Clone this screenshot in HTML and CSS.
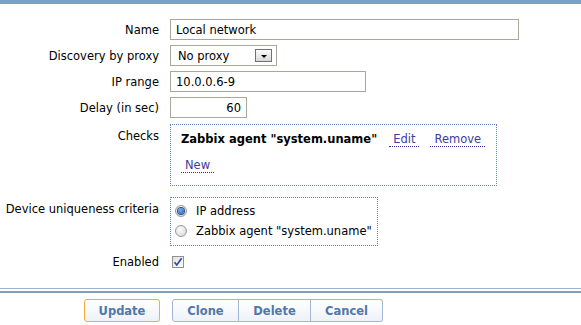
FILE: index.html
```html
<!DOCTYPE html>
<html lang="en">
<head>
  <meta charset="UTF-8">
  <title>Discovery rule</title>
  <link rel="stylesheet" href="styles.css">
</head>
<body>
<div class="topbar"></div>
<form class="form">
  <div class="row">
    <label class="lbl">Name</label>
    <div class="field"><input class="text name-input" type="text" value="Local network"></div>
  </div>
  <div class="row">
    <label class="lbl">Discovery by proxy</label>
    <div class="field">
      <div class="select"><span class="select-value">No proxy</span><span class="select-btn"><span class="select-arrow"></span></span></div>
    </div>
  </div>
  <div class="row">
    <label class="lbl">IP range</label>
    <div class="field"><input class="text ip-input" type="text" value="10.0.0.6-9"></div>
  </div>
  <div class="row delay-row">
    <label class="lbl">Delay (in sec)</label>
    <div class="field"><input class="text delay-input" type="text" value="60"></div>
  </div>
  <div class="row checks-row">
    <label class="lbl lbl-top">Checks</label>
    <div class="field">
      <div class="box checks-box">
        <div class="check-line">
          <span class="check-name">Zabbix agent "system.uname"</span>
          <a class="link edit-link" href="#">Edit</a>
          <a class="link" href="#">Remove</a>
        </div>
        <div class="check-new"><a class="link" href="#">New</a></div>
      </div>
    </div>
  </div>
  <div class="row uniq-row">
    <label class="lbl lbl-top">Device uniqueness criteria</label>
    <div class="field">
      <div class="box uniq-box">
        <div class="radio-line"><span class="radio checked"></span>IP address</div>
        <div class="radio-line"><span class="radio"></span>Zabbix agent "system.uname"</div>
      </div>
    </div>
  </div>
  <div class="row enabled-row">
    <label class="lbl">Enabled</label>
    <div class="field">
      <span class="checkbox"><svg width="10" height="10" viewBox="0 0 10 10"><path d="M1.5 5.2 L3.8 8 L8.6 1.2" fill="none" stroke="#2846a8" stroke-width="1.6"/></svg></span>
    </div>
  </div>
</form>
<div class="footer">
  <div class="rule-light"></div>
  <div class="rule-dark"></div>
  <div class="buttons">
    <button class="btn btn-main" type="button">Update</button>
    <div class="btn-group">
      <button class="btn btn-clone" type="button">Clone</button>
      <button class="btn btn-delete" type="button">Delete</button>
      <button class="btn btn-cancel" type="button">Cancel</button>
    </div>
  </div>
</div>
</body>
</html>
```

FILE: styles.css
```css
*, *::before, *::after { box-sizing: border-box; }
body { margin: 0; background: #fff; font-family: "DejaVu Sans", Verdana, sans-serif; font-size: 11.5px; color: #000; }
.topbar { height: 4px; background: #7a9fc8; }

.form { padding-top: 15px; }
.row { display: flex; align-items: center; margin-bottom: 5px; }
.lbl { width: 170px; flex: 0 0 170px; padding-right: 11px; text-align: right; line-height: 14px; white-space: nowrap; }
.lbl-top { align-self: flex-start; padding-top: 5px; }
.delay-row { margin-bottom: 6px; }
.checks-row { margin-bottom: 11px; }
.uniq-row { margin-bottom: 9px; }

.text { height: 21px; border: 1px solid #a8a899; padding: 0 5px; font: inherit; color: #000; background: #fff; outline: none; }
.name-input { width: 349px; }
.ip-input { width: 196px; }
.delay-input { width: 77px; text-align: right; padding-right: 5px; }

.select { width: 107px; height: 21px; border: 1px solid #a8a899; display: flex; align-items: center; justify-content: space-between; padding: 0 4px 0 7px; }
.select-btn { width: 17px; height: 13px; border: 1px solid #707070; background: linear-gradient(#fbfbfb, #d9d9d9); display: flex; align-items: center; justify-content: center; padding-top: 2px; }
.select-arrow { width: 0; height: 0; border-left: 3px solid transparent; border-right: 3px solid transparent; border-top: 3px solid #000; }

.box { border: 1px dotted #6b7fbe; }
.checks-box { width: 327px; padding: 6px 10px 12px 10px; }
.check-line { line-height: 16px; display: flex; align-items: baseline; white-space: nowrap; }
.check-name { font-weight: bold; margin-right: 12px; }
.link { color: #3d3d9b; text-decoration: none; border-bottom: 1px dotted #2a2a8a; padding: 0 4px; margin-right: 11px; line-height: 13px; }
.check-new { margin-top: 10px; line-height: 16px; }

.uniq-box { width: fit-content; padding: 3px 5px 4px 4px; }
.radio-line { height: 20px; display: flex; align-items: center; white-space: nowrap; }
.radio { width: 12px; height: 12px; border-radius: 50%; border: 1px solid #9a9a9a; background: radial-gradient(circle at 40% 35%, #fdfdfd, #d2d2d2); margin-right: 9px; position: relative; }
.radio.checked::after { content: ""; position: absolute; left: 2px; top: 2px; width: 6px; height: 6px; border-radius: 50%; background: radial-gradient(circle at 40% 35%, #6fb0ff, #1a56b8); box-shadow: 0 0 0 1px #3a4f77; }

.enabled-row { height: 14px; }
.checkbox { display: flex; align-items: center; justify-content: center; width: 12px; height: 12px; border: 1px solid #8f8f8f; background: linear-gradient(135deg, #e0e0e0, #fdfdfd); margin-left: 2px; }

.footer { margin-top: 19px; }
.rule-light { height: 1px; background: #9fb3cc; }
.rule-dark { height: 2px; margin-top: 2px; background: #829fbf; }
.buttons { display: flex; padding: 6px 0 0 84px; }
.btn { height: 23px; font: inherit; font-weight: bold; color: #5077ab; background: linear-gradient(#ffffff, #edf2f8); border: 1px solid #a3b7d3; padding: 0; cursor: pointer; }
.btn-main { width: 76px; border-color: #f7ab3c; border-radius: 3px; margin-right: 12px; }
.btn-group { display: flex; }
.btn-clone { width: 67px; border-radius: 3px 0 0 3px; }
.btn-delete { width: 72px; border-left-width: 0; }
.btn-cancel { width: 72px; border-left-width: 0; border-radius: 0 3px 3px 0; }
```
